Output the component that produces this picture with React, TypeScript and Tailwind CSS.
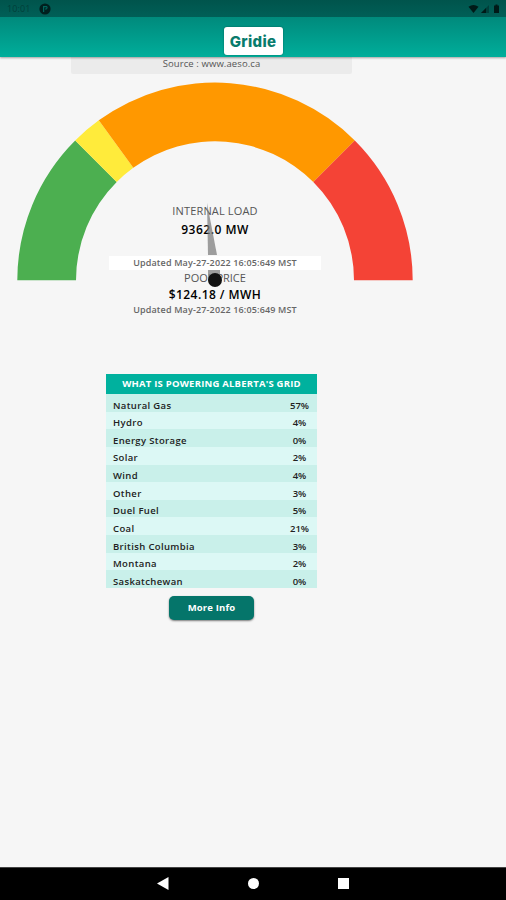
const sources = [
  { name: "Natural Gas", value: "57%" },
  { name: "Hydro", value: "4%" },
  { name: "Energy Storage", value: "0%" },
  { name: "Solar", value: "2%" },
  { name: "Wind", value: "4%" },
  { name: "Other", value: "3%" },
  { name: "Duel Fuel", value: "5%" },
  { name: "Coal", value: "21%" },
  { name: "British Columbia", value: "3%" },
  { name: "Montana", value: "2%" },
  { name: "Saskatchewan", value: "0%" },
];

// angles in degrees, 180 = far left, 0 = far right
const segments = [
  { from: 180, to: 135, color: "#4caf50" },
  { from: 135, to: 126, color: "#ffeb3b" },
  { from: 126, to: 45, color: "#ff9800" },
  { from: 45, to: 0, color: "#f44336" },
];

const OUTER = 197.7;
const INNER = 139;

function point(r: number, deg: number) {
  const a = (deg * Math.PI) / 180;
  return `${(198 + r * Math.cos(a)).toFixed(2)} ${(198.3 - r * Math.sin(a)).toFixed(2)}`;
}

function arc(from: number, to: number) {
  return `M${point(OUTER, from)} A${OUTER} ${OUTER} 0 0 1 ${point(OUTER, to)} L${point(INNER, to)} A${INNER} ${INNER} 0 0 0 ${point(INNER, from)}Z`;
}

function StatusBar() {
  return (
    <div className="h-[17px] bg-gradient-to-b from-[#00544c] to-[#005f57] flex items-center justify-between pl-[7px] pr-[4px] text-[#003f3a]">
      <div className="flex items-center gap-[9px]">
        <span className="text-[9px] leading-none tracking-[0.1px]">10:01</span>
        <svg width="12" height="12" viewBox="0 0 12 12">
          <circle cx="6" cy="6" r="5.6" fill="#00201e" />
          <path d="M4.6 9V3.6H7.4Q8.8 4.6 7.2 6H6" stroke="#00665d" strokeWidth="1.2" fill="none" />
        </svg>
      </div>
      <svg width="34" height="12" viewBox="0 0 34 12" fill="#001a18">
        <path d="M0.5 3.8Q5.5 0 10.5 3.8L5.5 10Z" />
        <path d="M13 10L21 2V10Z" opacity="0.4" />
        <path d="M13 10L18 5V10Z" />
        <path d="M26 2.5H27.5V1.5H29.5V2.5H31V10H26Z" />
      </svg>
    </div>
  );
}

function Header() {
  return (
    <header className="relative z-10 h-[57px] shrink-0 shadow-[0_1px_2px_rgba(0,0,0,0.35)]">
      <StatusBar />
      <div className="h-[40px] bg-gradient-to-b from-[#008a7c] to-[#00ae9b] flex justify-center items-start pt-[10px]">
        <div className="w-[59px] h-[28px] bg-white rounded-[3px] shadow-[0_0_2px_rgba(0,0,0,0.4)] flex items-center justify-center">
          <span className="font-['Inter'] text-[15px] leading-none font-extrabold text-[#087b6c] tracking-[0.3px]">Gridie</span>
        </div>
      </div>
    </header>
  );
}

function Gauge() {
  return (
    <section className="grid w-[396px] h-[240px] ml-[17px] mt-[8px]">
      <svg className="[grid-area:1/1]" width="396" height="240" viewBox="0 0 396 240">
        {segments.map(s => (
          <path key={s.color} d={arc(s.from, s.to)} fill={s.color} />
        ))}
      </svg>
      <div className="[grid-area:1/1] relative flex flex-col items-center text-center pt-[121px] whitespace-nowrap">
        <div className="h-[16px] leading-[15px] text-[11px] font-medium text-[#555] tracking-[0.15px]">INTERNAL LOAD</div>
        <div className="h-[21px] leading-[22px] text-[12px] font-semibold text-black tracking-[0.5px]">9362.0 MW</div>
        <div className="w-[212px] h-[14px] mt-[16px] bg-white" />
        <div className="h-[15px] leading-[14px] mt-px text-[11px] font-medium text-[#555]">POOL PRICE</div>
        <div className="h-[17px] leading-[18px] text-[12px] font-semibold text-black tracking-[0.45px]">$124.18 / MWH</div>
        <div className="h-[14px] leading-[14px] text-[9px] font-semibold text-[#666] tracking-[0.15px]">Updated May-27-2022 16:05:649 MST</div>
      </div>
      <svg className="[grid-area:1/1] relative" width="396" height="240" viewBox="0 0 396 240">
        <path d="M190 121L200 173H191Z" fill="#777" fillOpacity="0.7" />
        <path d="M191 188H203V198H191Z" fill="#777" fillOpacity="0.7" />
        <circle cx="198" cy="198" r="7" fill="#111" />
      </svg>
      <div className="[grid-area:1/1] relative flex justify-center pt-[174px]">
        <div className="w-[212px] h-[14px] leading-[14px] bg-white text-center text-[9px] font-semibold text-[#666] tracking-[0.15px] whitespace-nowrap">
          Updated May-27-2022 16:05:649 MST
        </div>
      </div>
    </section>
  );
}

function SourceTable() {
  return (
    <section className="w-[211px] ml-[106px] mt-[52px]">
      <h2 className="h-[20px] leading-[20px] bg-[#00b19e] text-white text-center text-[9.5px] font-bold tracking-[0.22px] whitespace-nowrap">
        WHAT IS POWERING ALBERTA'S GRID
      </h2>
      <div className="h-[194px] grid grid-rows-11">
        {sources.map(s => (
          <div
            key={s.name}
            className="flex items-center justify-between pl-[7px] pt-[5px] odd:bg-[#c9f0ea] even:bg-[#dcf8f5] text-[9.5px] font-semibold leading-none text-[#222] tracking-[0.36px]"
          >
            <span>{s.name}</span>
            <span className="w-[35px] text-center tracking-normal">{s.value}</span>
          </div>
        ))}
      </div>
    </section>
  );
}

function NavBar() {
  return (
    <nav className="h-[33px] shrink-0 bg-black border-t border-[#444] flex items-center">
      <svg width="506" height="32" viewBox="0 0 506 32" fill="#fff">
        <path d="M157 15.5L168.5 9V22Z" />
        <circle cx="253.5" cy="15.5" r="5.5" />
        <rect x="338" y="10" width="11" height="11" />
      </svg>
    </nav>
  );
}

export default function App() {
  return (
    <div className="w-[506px] h-[900px] flex flex-col overflow-hidden bg-[#f6f6f6] font-['Open_Sans',sans-serif]">
      <Header />
      <main className="flex-1 min-h-0">
        <div className="w-[281px] h-[17px] ml-[71px] bg-[#ebebeb] rounded-b-[2px] text-center text-[9.5px] leading-[13px] font-medium text-[#555] tracking-[0.1px]">
          Source : www.aeso.ca
        </div>
        <Gauge />
        <SourceTable />
        <button className="block w-[85px] h-[24px] ml-[169px] mt-[8px] rounded-[5px] bg-[#05756a] text-white text-[9.5px] font-bold leading-none tracking-[0.15px] shadow-[0_1px_2px_rgba(0,0,0,0.5)]">
          More Info
        </button>
      </main>
      <NavBar />
    </div>
  );
}
